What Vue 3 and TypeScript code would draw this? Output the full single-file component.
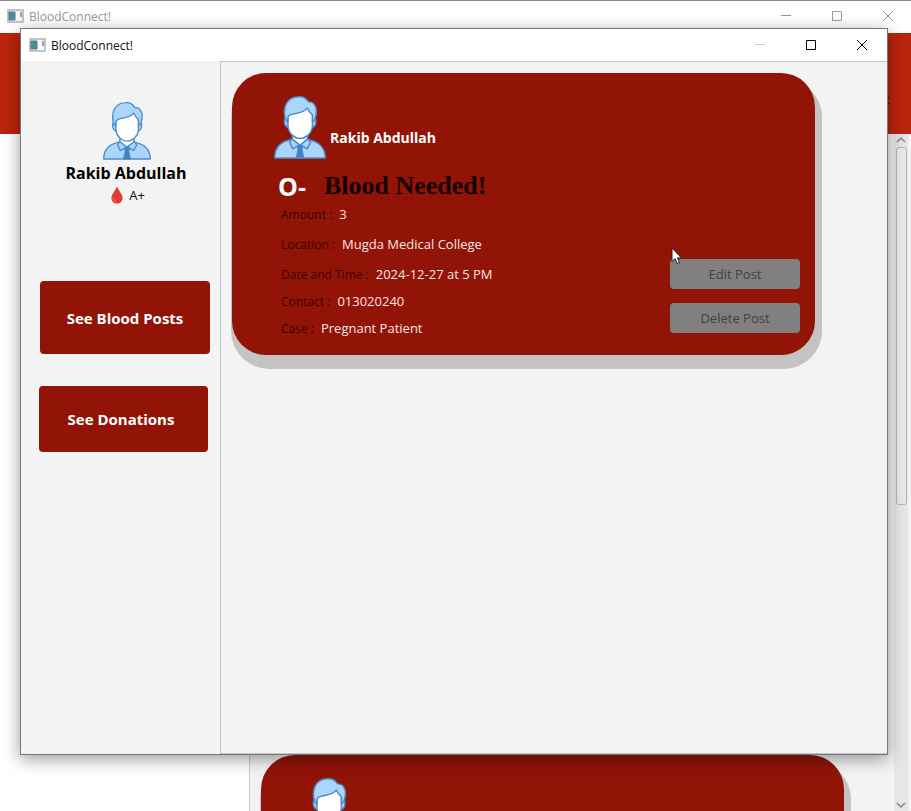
<script setup lang="ts">
import { defineComponent, h } from 'vue'

interface Detail {
  label: string
  value: string
  spaced?: boolean
}

const details: Detail[] = [
  { label: 'Amount :', value: '3', spaced: true },
  { label: 'Location :', value: 'Mugda Medical College', spaced: true },
  { label: 'Date and Time :', value: '2024-12-27 at 5 PM' },
  { label: 'Contact :', value: '013020240' },
  { label: 'Case :', value: 'Pregnant Patient' },
]

const backgroundPosts: number[] = [1, 2, 3]

const path = (d: string, fill: string) =>
  h('path', { d, fill, stroke: '#4a8ccb', 'stroke-width': 4, 'stroke-linejoin': 'round' })

const Avatar = defineComponent({
  render: () =>
    h('svg', { viewBox: '0 0 142 172', 'aria-hidden': 'true' }, [
      path('M2 169C2 141 20 124 48 119L92 119C121 124 140 141 140 169Z', '#acd5fc'),
      path('M50 106V120L71 134L92 120V106Z', '#fff'),
      path('M35 58C25 60 26 84 40 86M107 58C118 60 117 84 103 86', '#acd5fc'),
      path('M38 50V82C40 103 56 116 71 116C87 116 103 103 105 82V45L92 32L60 46Z', '#fff'),
      path('M38 72L31 62C22 28 38 3 66 2C78 1 88 6 94 16C113 16 121 36 112 62L105 72V52C98 46 94 41 91 33C75 53 46 43 38 57Z', '#acd5fc'),
      path('M50 117L43 126L51 144L70 134ZM92 117L100 126L91 144L72 134Z', '#acd5fc'),
      path('M64 136H78L76 146L81 169H61L66 146Z', '#3f82bd'),
    ]),
})

const AppIcon = defineComponent({
  render: () =>
    h('svg', { viewBox: '0 0 17 14', 'aria-hidden': 'true' }, [
      h('rect', { x: 1, y: 1, width: 15, height: 12, fill: '#f5f7fa', stroke: '#aeb2b9', 'stroke-width': 1.5 }),
      h('rect', { x: 2, y: 3, width: 6, height: 8, fill: '#4c9387' }),
      h('path', { d: 'M2 3H8V11H2Z', fill: 'none', stroke: '#547997', 'stroke-width': 1 }),
      h('path', { d: 'M14 3V8', stroke: '#5b9a7a', 'stroke-width': 1.5 }),
    ]),
})
</script>

<template>
  <div class="desktop">
    <section class="back-window">
      <header class="titlebar titlebar-back">
        <AppIcon class="app-icon" />
        <span class="title">BloodConnect!</span>
        <button class="win-button" aria-label="Minimize"><svg viewBox="0 0 12 12"><path d="M1 5.5H11" /></svg></button>
        <button class="win-button" aria-label="Maximize"><svg viewBox="0 0 12 12"><path d="M1.5 1.5H10.5V10.5H1.5Z" /></svg></button>
        <button class="win-button" aria-label="Close"><svg viewBox="0 0 12 12"><path d="M1 1L11 11M11 1L1 11" /></svg></button>
      </header>
      <div class="banner"><span>t</span></div>
      <div class="back-body">
        <div class="back-side"></div>
        <div class="back-feed">
          <article v-for="post in backgroundPosts" :key="post" class="card">
            <Avatar class="card-avatar" />
          </article>
        </div>
        <div class="scrollbar">
          <svg class="arrow" viewBox="0 0 10 6"><path d="M1 5L5 1L9 5" /></svg>
          <div class="track"><div class="thumb"></div></div>
          <svg class="arrow" viewBox="0 0 10 6"><path d="M1 1L5 5L9 1" /></svg>
        </div>
      </div>
    </section>

    <section class="front-window">
      <header class="titlebar">
        <AppIcon class="app-icon" />
        <span class="title">BloodConnect!</span>
        <button class="win-button faded" aria-label="Minimize" disabled><svg viewBox="0 0 12 12"><path d="M1 5.5H11" /></svg></button>
        <button class="win-button" aria-label="Maximize"><svg viewBox="0 0 12 12"><path d="M1.5 1.5H10.5V10.5H1.5Z" /></svg></button>
        <button class="win-button" aria-label="Close"><svg viewBox="0 0 12 12"><path d="M1 1L11 11M11 1L1 11" /></svg></button>
      </header>
      <div class="front-body">
        <aside class="sidebar">
          <Avatar class="profile-avatar" />
          <h1 class="profile-name">Rakib Abdullah</h1>
          <p class="blood">
            <svg class="drop" viewBox="0 0 12 18"><path d="M6 0.5C8 5 11.6 8.500 11.600 12C11.600 15.500 9 17.500 6 17.500S0.400 15.500 0.400 12C0.400 8.500 4 5 6 0.500Z" fill="#df3b2f" /><path d="M2 11.500C2 14 3.500 15.500 5.500 16" fill="none" stroke="#ee7466" /></svg>
            <span>A+</span>
          </p>
          <button class="nav-button nav-posts">See Blood Posts</button>
          <button class="nav-button nav-donations">See Donations</button>
        </aside>
        <main class="feed">
          <article class="card">
            <div class="author">
              <Avatar class="card-avatar" />
              <span class="author-name">Rakib Abdullah</span>
            </div>
            <div class="headline">
              <strong class="group">O-</strong>
              <h2>Blood Needed!</h2>
            </div>
            <div class="card-foot">
              <dl>
                <div v-for="item in details" :key="item.label" class="detail" :class="{ spaced: item.spaced }">
                  <dt>{{ item.label }}</dt>
                  <dd>{{ item.value }}</dd>
                </div>
              </dl>
              <div class="actions">
                <button class="action">Edit Post</button>
                <button class="action">Delete Post</button>
              </div>
            </div>
          </article>
        </main>
      </div>
    </section>

    <svg class="cursor" viewBox="0 0 12 18"><path d="M1 1V14.500L4 11.700L6.200 16.500L8.500 15.500L6.400 11H10.500Z" fill="#fff" stroke="#1c1c1c" /></svg>
  </div>
</template>

<style>
body {
  margin: 0;
}
</style>

<style scoped>
* {
  box-sizing: border-box;
}
.desktop {
  position: relative;
  height: 100vh;
  overflow: hidden;
  background: #fff;
  font-family: "Open Sans", "Noto Sans", sans-serif;
  font-size: 12px;
  color: #111;
}
button {
  border: 0;
  padding: 0;
  font-family: inherit;
}
.back-window {
  display: flex;
  flex-direction: column;
  height: 100%;
  border-top: 1px solid #8d8b8d;
}
.titlebar {
  display: flex;
  flex: none;
  align-items: center;
  gap: 5px;
  height: 32px;
  padding: 0 2px 0 8px;
  background: #fff;
}
.titlebar-back {
  padding: 0 0 2px 7px;
  color: #999;
}
.app-icon {
  width: 17px;
  height: 14px;
}
.title {
  flex: 1;
}
.win-button {
  display: grid;
  place-items: center;
  width: 46px;
  height: 30px;
  background: none;
  color: #000;
}
.titlebar-back .win-button {
  color: #999;
}
.titlebar .win-button.faded {
  color: #ccc;
}
.win-button svg {
  width: 12px;
  height: 12px;
  fill: none;
  stroke: currentColor;
}
.banner {
  display: flex;
  flex: none;
  align-items: center;
  justify-content: flex-end;
  height: 101px;
  padding: 32px 21px 0 0;
  background: #bb240d;
  color: #3b1a12;
}
.back-body {
  display: flex;
  flex: 1;
  min-height: 0;
}
.back-side {
  flex: none;
  width: 249px;
}
.back-feed {
  display: flex;
  flex: 1;
  flex-direction: column;
  gap: 28px;
  padding: 1px 50px 0 11px;
  overflow: hidden;
  background: #f3f3f3;
  border-left: 1px solid #c8c8c8;
}
.scrollbar {
  display: flex;
  flex: none;
  flex-direction: column;
  align-items: center;
  width: 17px;
  padding: 3px 0 3px;
  background: #e6e6e6;
  border-right: 3px solid #f3f3f3;
}
.arrow {
  flex: none;
  width: 10px;
  height: 6px;
  fill: none;
  stroke: #888;
  stroke-width: 1.5;
}
.track {
  flex: 1;
  width: 11px;
  padding: 4px 0;
}
.thumb {
  height: 55%;
  background: #e9e9e9;
  border: 1px solid #b5b5b5;
  border-radius: 3px;
}
.front-window {
  position: absolute;
  top: 28px;
  right: 23px;
  bottom: 56px;
  left: 20px;
  display: flex;
  flex-direction: column;
  background: #f3f3f3;
  border: 1px solid #777;
  box-shadow: 0 4px 16px rgba(0, 0, 0, 0.4);
}
.front-body {
  display: flex;
  flex: 1;
  min-height: 0;
}
.sidebar {
  display: flex;
  flex: none;
  flex-direction: column;
  align-items: center;
  width: 199px;
  padding: 41px 0 0;
}
.profile-avatar {
  width: 48px;
  height: 58px;
  margin-left: 12px;
}
.profile-name {
  margin: 0 0 0 11px;
  font-size: 16px;
  line-height: 26px;
  color: #000;
}
.blood {
  display: flex;
  align-items: center;
  gap: 6px;
  height: 18px;
  margin: 0 0 77px 15px;
  font-size: 13px;
}
.drop {
  width: 12px;
  height: 18px;
}
.nav-button {
  background: #911407;
  border-radius: 4px;
  color: #fff;
  font-size: 15px;
  font-weight: 700;
}
.nav-posts {
  width: 170px;
  height: 73px;
  margin-left: 9px;
}
.nav-donations {
  width: 169px;
  height: 66px;
  margin: 32px 0 0 6px;
  padding-right: 5px;
}
.feed {
  flex: 1;
  padding: 11px 72px 0 11px;
  border: 1px solid #c6c6c6;
  border-right: 0;
}
.card {
  flex: none;
  height: 282px;
  padding: 23px 15px 0 42px;
  background: #911407;
  border-radius: 34px;
  box-shadow: 3px 10px 0 4px #c4c4c4;
}
.card-avatar {
  width: 52px;
  height: 63px;
}
.author {
  display: flex;
  align-items: flex-end;
  gap: 4px;
  height: 63px;
}
.author-name {
  padding-bottom: 10px;
  color: #fff;
  font-size: 14px;
  font-weight: 700;
  line-height: 22px;
}
.headline {
  display: flex;
  align-items: center;
  gap: 18px;
  height: 30px;
  margin-top: 12px;
  padding-left: 4px;
}
.group {
  color: #fff;
  font-size: 25px;
}
h2 {
  margin: 0;
  color: #160200;
  font-family: "Liberation Serif", serif;
  font-size: 26px;
  font-weight: 700;
}
.card-foot {
  display: flex;
  justify-content: space-between;
}
dl {
  margin: 0;
  padding-left: 7px;
}
.detail {
  display: flex;
  align-items: baseline;
  gap: 7px;
  height: 27px;
  line-height: 27px;
}
.spaced {
  height: 30px;
}
dt {
  color: #3a0500;
}
dd {
  margin: 0;
  color: #f7e5e3;
  font-size: 13px;
}
.actions {
  display: flex;
  flex-direction: column;
  gap: 14px;
  padding-top: 58px;
}
.action {
  width: 130px;
  height: 30px;
  background: #808080;
  border-radius: 4px;
  color: #404040;
  font-size: 13px;
}
.cursor {
  position: absolute;
  top: 247px;
  left: 671px;
  width: 12px;
  height: 18px;
}
</style>
